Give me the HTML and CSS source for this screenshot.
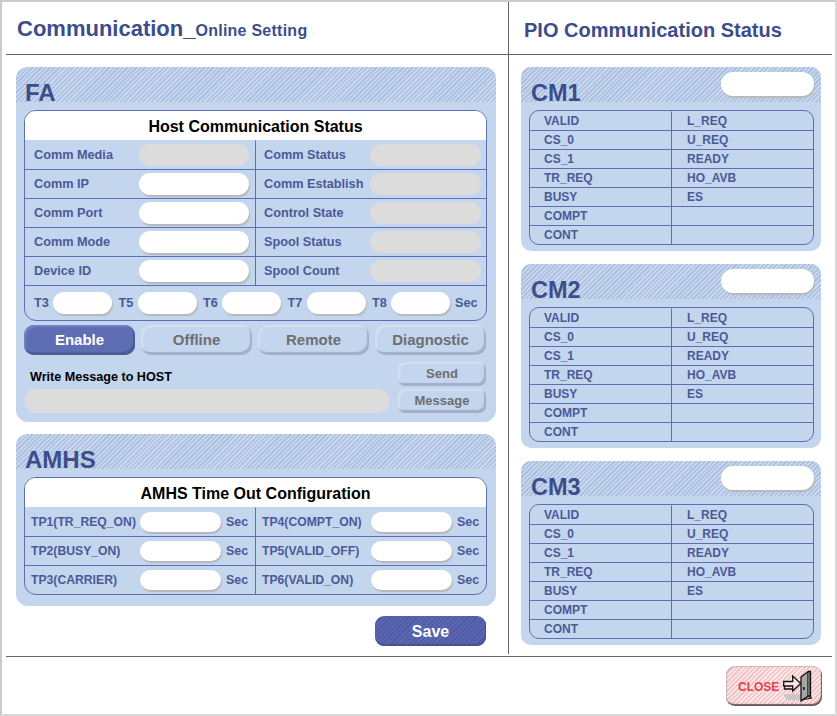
FILE: index.html
```html
<!DOCTYPE html>
<html lang="en">
<head>
<meta charset="utf-8">
<title>Communication Online Setting</title>
<link rel="stylesheet" href="styles.css">
</head>
<body>
<div class="window">
  <div class="columns">
    <main class="col-left">
      <header class="head head-left"><h1 class="title">Communication_<span class="subtitle">Online Setting</span></h1></header>
      <section class="panel panel-fa">
        <div class="hatch hatch-left"><h2 class="panel-name">FA</h2></div>
        <div class="panel-body">
          <div class="box">
            <div class="box-title">Host Communication Status</div>
            <div class="status-grid">
              <div class="cell cell-l first"><span class="lab">Comm Media</span><span class="pill grey"></span></div>
              <div class="cell cell-r first"><span class="lab">Comm Status</span><span class="pill grey"></span></div>
              <div class="cell cell-l"><span class="lab">Comm IP</span><span class="pill white"></span></div>
              <div class="cell cell-r"><span class="lab">Comm Establish</span><span class="pill grey"></span></div>
              <div class="cell cell-l"><span class="lab">Comm Port</span><span class="pill white"></span></div>
              <div class="cell cell-r"><span class="lab">Control State</span><span class="pill grey"></span></div>
              <div class="cell cell-l"><span class="lab">Comm Mode</span><span class="pill white"></span></div>
              <div class="cell cell-r"><span class="lab">Spool Status</span><span class="pill grey"></span></div>
              <div class="cell cell-l"><span class="lab">Device ID</span><span class="pill white"></span></div>
              <div class="cell cell-r"><span class="lab">Spool Count</span><span class="pill grey"></span></div>
            </div>
            <div class="t-row">
              <span class="lab">T3</span><span class="pill white t"></span>
              <span class="lab">T5</span><span class="pill white t"></span>
              <span class="lab">T6</span><span class="pill white t"></span>
              <span class="lab">T7</span><span class="pill white t"></span>
              <span class="lab">T8</span><span class="pill white t"></span>
              <span class="lab">Sec</span>
            </div>
          </div>
          <div class="mode-row">
            <button class="btn on">Enable</button>
            <button class="btn">Offline</button>
            <button class="btn">Remote</button>
            <button class="btn">Diagnostic</button>
          </div>
          <div class="msg-row">
            <div class="msg-left">
              <div class="msg-label">Write Message to HOST</div>
              <div class="msg-field"></div>
            </div>
            <div class="msg-right">
              <button class="btn small">Send</button>
              <button class="btn small">Message</button>
            </div>
          </div>
        </div>
      </section>
      <section class="panel panel-amhs">
        <div class="hatch hatch-left"><h2 class="panel-name">AMHS</h2></div>
        <div class="panel-body">
          <div class="box">
            <div class="box-title">AMHS Time Out Configuration</div>
            <div class="status-grid">
              <div class="cell tp tp-l first"><span class="lab">TP1(TR_REQ_ON)</span><span class="pill white"></span><span class="lab">Sec</span></div>
              <div class="cell tp tp-r first"><span class="lab">TP4(COMPT_ON)</span><span class="pill white"></span><span class="lab">Sec</span></div>
              <div class="cell tp tp-l"><span class="lab">TP2(BUSY_ON)</span><span class="pill white"></span><span class="lab">Sec</span></div>
              <div class="cell tp tp-r"><span class="lab">TP5(VALID_OFF)</span><span class="pill white"></span><span class="lab">Sec</span></div>
              <div class="cell tp tp-l"><span class="lab">TP3(CARRIER)</span><span class="pill white"></span><span class="lab">Sec</span></div>
              <div class="cell tp tp-r"><span class="lab">TP6(VALID_ON)</span><span class="pill white"></span><span class="lab">Sec</span></div>
            </div>
          </div>
        </div>
      </section>
      <div class="save-row"><button class="save">Save</button></div>
    </main>
    <aside class="col-right">
      <header class="head head-right"><h1 class="title-r">PIO Communication Status</h1></header>
      <section class="cm">
        <div class="hatch hatch-cm"><h2 class="panel-name cm-name">CM1</h2><span class="pill white cm-pill"></span></div>
        <div class="cm-table">
          <div>VALID</div><div>L_REQ</div>
          <div>CS_0</div><div>U_REQ</div>
          <div>CS_1</div><div>READY</div>
          <div>TR_REQ</div><div>HO_AVB</div>
          <div>BUSY</div><div>ES</div>
          <div>COMPT</div><div></div>
          <div>CONT</div><div></div>
        </div>
      </section>
      <section class="cm">
        <div class="hatch hatch-cm"><h2 class="panel-name cm-name">CM2</h2><span class="pill white cm-pill"></span></div>
        <div class="cm-table">
          <div>VALID</div><div>L_REQ</div>
          <div>CS_0</div><div>U_REQ</div>
          <div>CS_1</div><div>READY</div>
          <div>TR_REQ</div><div>HO_AVB</div>
          <div>BUSY</div><div>ES</div>
          <div>COMPT</div><div></div>
          <div>CONT</div><div></div>
        </div>
      </section>
      <section class="cm">
        <div class="hatch hatch-cm"><h2 class="panel-name cm-name">CM3</h2><span class="pill white cm-pill"></span></div>
        <div class="cm-table">
          <div>VALID</div><div>L_REQ</div>
          <div>CS_0</div><div>U_REQ</div>
          <div>CS_1</div><div>READY</div>
          <div>TR_REQ</div><div>HO_AVB</div>
          <div>BUSY</div><div>ES</div>
          <div>COMPT</div><div></div>
          <div>CONT</div><div></div>
        </div>
      </section>
    </aside>
  </div>
  <footer class="foot">
    <button class="close">
      <span class="close-text">CLOSE</span>
      <svg class="door" width="32" height="32" viewBox="0 0 32 32" aria-hidden="true">
        <path d="M0 24h18v6H4z" fill="#bbb"/>
        <path d="M0 25h18M1 27h18M2 29h17" stroke="#eee" stroke-width="1" stroke-dasharray="1 1"/>
        <path d="M26 26l3 2-11 2" fill="#999" stroke="#111" stroke-width="1"/>
        <path d="M0.700 11.500h9V6l8 7.500-8 7.500v-5h-9z" fill="#f7e6e6" stroke="#111" stroke-width="1.300"/>
        <path d="M1.500 16v3h8" fill="none" stroke="#111" stroke-width="1.300"/>
        <path d="M18 7L25 1.500V26l-7 5z" fill="#a6a6a6" stroke="#111" stroke-width="1.300"/>
        <path d="M25 1.500h2.500V26H25" fill="#6e6e6e" stroke="#111" stroke-width="1.300"/>
        <rect x="20" y="17" width="1.600" height="3" fill="#111"/>
      </svg>
    </button>
  </footer>
</div>
</body>
</html>
```

FILE: styles.css
```css
* { box-sizing: border-box; }
html, body { margin: 0; padding: 0; }
body { width: 837px; height: 716px; background: #fff; font-family: "Liberation Sans", Arial, sans-serif; overflow: hidden; }
button { font-family: inherit; padding: 0; cursor: pointer; }
h1, h2 { margin: 0; }

.window { width: 837px; height: 716px; border: 2px solid #cbcbcb; border-bottom-color: #d8d8d8; border-right-color: #d8d8d8; padding: 0 3px 0 4px; background: #fff; }
.columns { display: flex; height: 652px; }
.col-left { width: 503px; border-right: 1px solid #666; padding-left: 10px; }
.col-right { flex: 1; padding-left: 12px; }

.head { height: 53px; border-bottom: 1px solid #666; display: flex; align-items: center; padding-top: 4px; }
.head-left { margin-left: -10px; padding-left: 11px; margin-bottom: 12px; }
.head-right { margin-left: -12px; padding-left: 15px; margin-bottom: 12px; }
.title { font-size: 22px; font-weight: bold; color: #3d4d8a; line-height: 50px; white-space: nowrap; }
.subtitle { font-size: 16px; letter-spacing: .25px; }
.title-r { font-size: 20px; font-weight: bold; color: #3d4d8a; }

.panel { width: 480px; background: #c4d5ee; border-radius: 12px; overflow: hidden; }
.panel-fa { height: 355px; margin-bottom: 12px; }
.panel-amhs { height: 172px; }
.hatch { height: 35px; display: flex; align-items: flex-end; background: repeating-linear-gradient(135deg, #c8d8ef 0, #c8d8ef 1.6px, #adc0df 1.6px, #adc0df 3.2px); }
.hatch-left { padding-left: 9px; }
.panel-name { font-size: 24px; line-height: 24px; font-weight: bold; color: #3d4d8a; margin-bottom: -3px; }
.panel-body { padding: 8px 9px 0 8px; }

.box { border: 1px solid #5f6db5; border-radius: 12px; overflow: hidden; }
.box-title { height: 29px; background: #fff; color: #000; font-size: 16px; font-weight: bold; text-align: center; line-height: 31px; }
.status-grid { display: grid; grid-template-columns: 231px 1fr; }
.cell { height: 29px; display: flex; align-items: center; border-top: 1px solid #5f6db5; }
.cell.first { border-top-color: transparent; }
.cell-l, .tp-l { border-right: 1px solid #5f6db5; }
.cell-l { padding-left: 9px; }
.cell-r { padding-left: 8px; }
.cell-l .lab { width: 105px; }
.cell-r .lab { width: 106px; }
.lab { font-size: 12.700px; font-weight: bold; color: #4a5a96; white-space: nowrap; }
.pill { display: block; height: 22px; border-radius: 11px; flex: none; }
.cell .pill { width: 110px; }
.cell-r .pill { width: 111px; }
.grey { background: #dcdcdc; }
.white { background: #fff; box-shadow: 1px 2px 1px #b8b8b8; }

.tp .lab:first-child { width: 109px; font-size: 12.200px; }
.tp { padding-left: 6px; }
.tp .pill { width: 81px; height: 20px; margin-right: 5px; }
.tp .lab:last-child { font-size: 12.500px; }

.t-row { height: 35px; display: flex; align-items: center; border-top: 1px solid #5f6db5; padding-left: 9px; gap: 3px; }
.t-row .lab { width: 16px; }
.t-row .lab:nth-child(n+3) { margin-left: 3.500px; }
.t-row .lab:last-child { width: auto; margin-left: 2px; }
.pill.t { width: 59px; }

.mode-row { display: flex; gap: 6px; margin-top: 4px; }
.btn { width: 111px; height: 30px; border: 0; border-radius: 10px; background: #c4d5ee; color: #6e6e6e; font-size: 15px; font-weight: bold; padding-bottom: 2px; box-shadow: inset -2px -3px 1px #a3afc8, inset 2px 2px 1px #d2e0f4; }
.btn.on { background: #5f6db3; color: #fff; box-shadow: inset -2px -3px 1px #4d5a9c, inset 2px 2px 1px #7381c0; }
.msg-row { display: flex; margin-top: 7px; }
.msg-left { width: 364px; margin-left: 1px; margin-right: 9px; }
.msg-label { height: 27px; padding: 8px 0 0 5px; font-size: 12.600px; font-weight: bold; color: #000; line-height: 15px; }
.msg-field { height: 24px; background: #dcdcdc; border-radius: 11px; }
.msg-right { display: flex; flex-direction: column; gap: 3px; }
.btn.small { width: 88px; height: 24px; border-radius: 7px; font-size: 13px; }

.save-row { display: flex; justify-content: flex-end; margin-top: 10px; padding-right: 10px; width: 480px; }
.save { width: 111px; height: 30px; border: 0; border-radius: 9px; color: #fff; font-size: 16px; font-weight: bold; padding-top: 2px; background: repeating-linear-gradient(135deg, #5d69b3 0, #5d69b3 1.6px, #4f5ba6 1.6px, #4f5ba6 3.2px); box-shadow: inset -1px -2px 1px #47528f; }

.cm { width: 300px; height: 184px; background: #c4d5ee; border-radius: 10px; overflow: hidden; margin-bottom: 13px; }
.hatch-cm { justify-content: space-between; padding: 0 7px 0 10px; }
.cm-name { font-size: 23.500px; }
.cm-pill { width: 93px; height: 24px; align-self: flex-start; margin-top: 5px; border-radius: 12px; }
.cm-table { margin: 8px 7px 0 8px; border: 1px solid #5f6db5; border-radius: 10px; overflow: hidden; display: grid; grid-template-columns: 142px 1fr; grid-auto-rows: 19px; }
.cm-table div { font-size: 12px; font-weight: bold; color: #4a5a96; line-height: 19px; padding-left: 14px; border-top: 1px solid #5f6db5; height: 19px; }
.cm-table div:nth-child(odd) { border-right: 1px solid #5f6db5; }
.cm-table div:nth-child(even) { padding-left: 15px; }
.cm-table div:nth-child(-n+2) { border-top-color: transparent; }

.foot { height: 58px; margin-top: 2px; border-top: 1px solid #666; display: flex; justify-content: flex-end; padding: 9px 10px 0 0; }
.close { width: 96px; height: 40px; border: 0; border-radius: 9px; display: flex; align-items: center; padding: 0 0 0 12px; gap: 4px; color: #e04452; font-size: 12px; font-weight: bold; background: repeating-linear-gradient(135deg, #fbe9e9 0, #fbe9e9 1.6px, #f3c3c6 1.6px, #f3c3c6 3.2px); box-shadow: inset -1px -2px 1px #6a5a5a, inset 1px 1px 1px #c9b6b6; }
.close-text { padding-top: 2px; }
.door { flex: none; }
```
